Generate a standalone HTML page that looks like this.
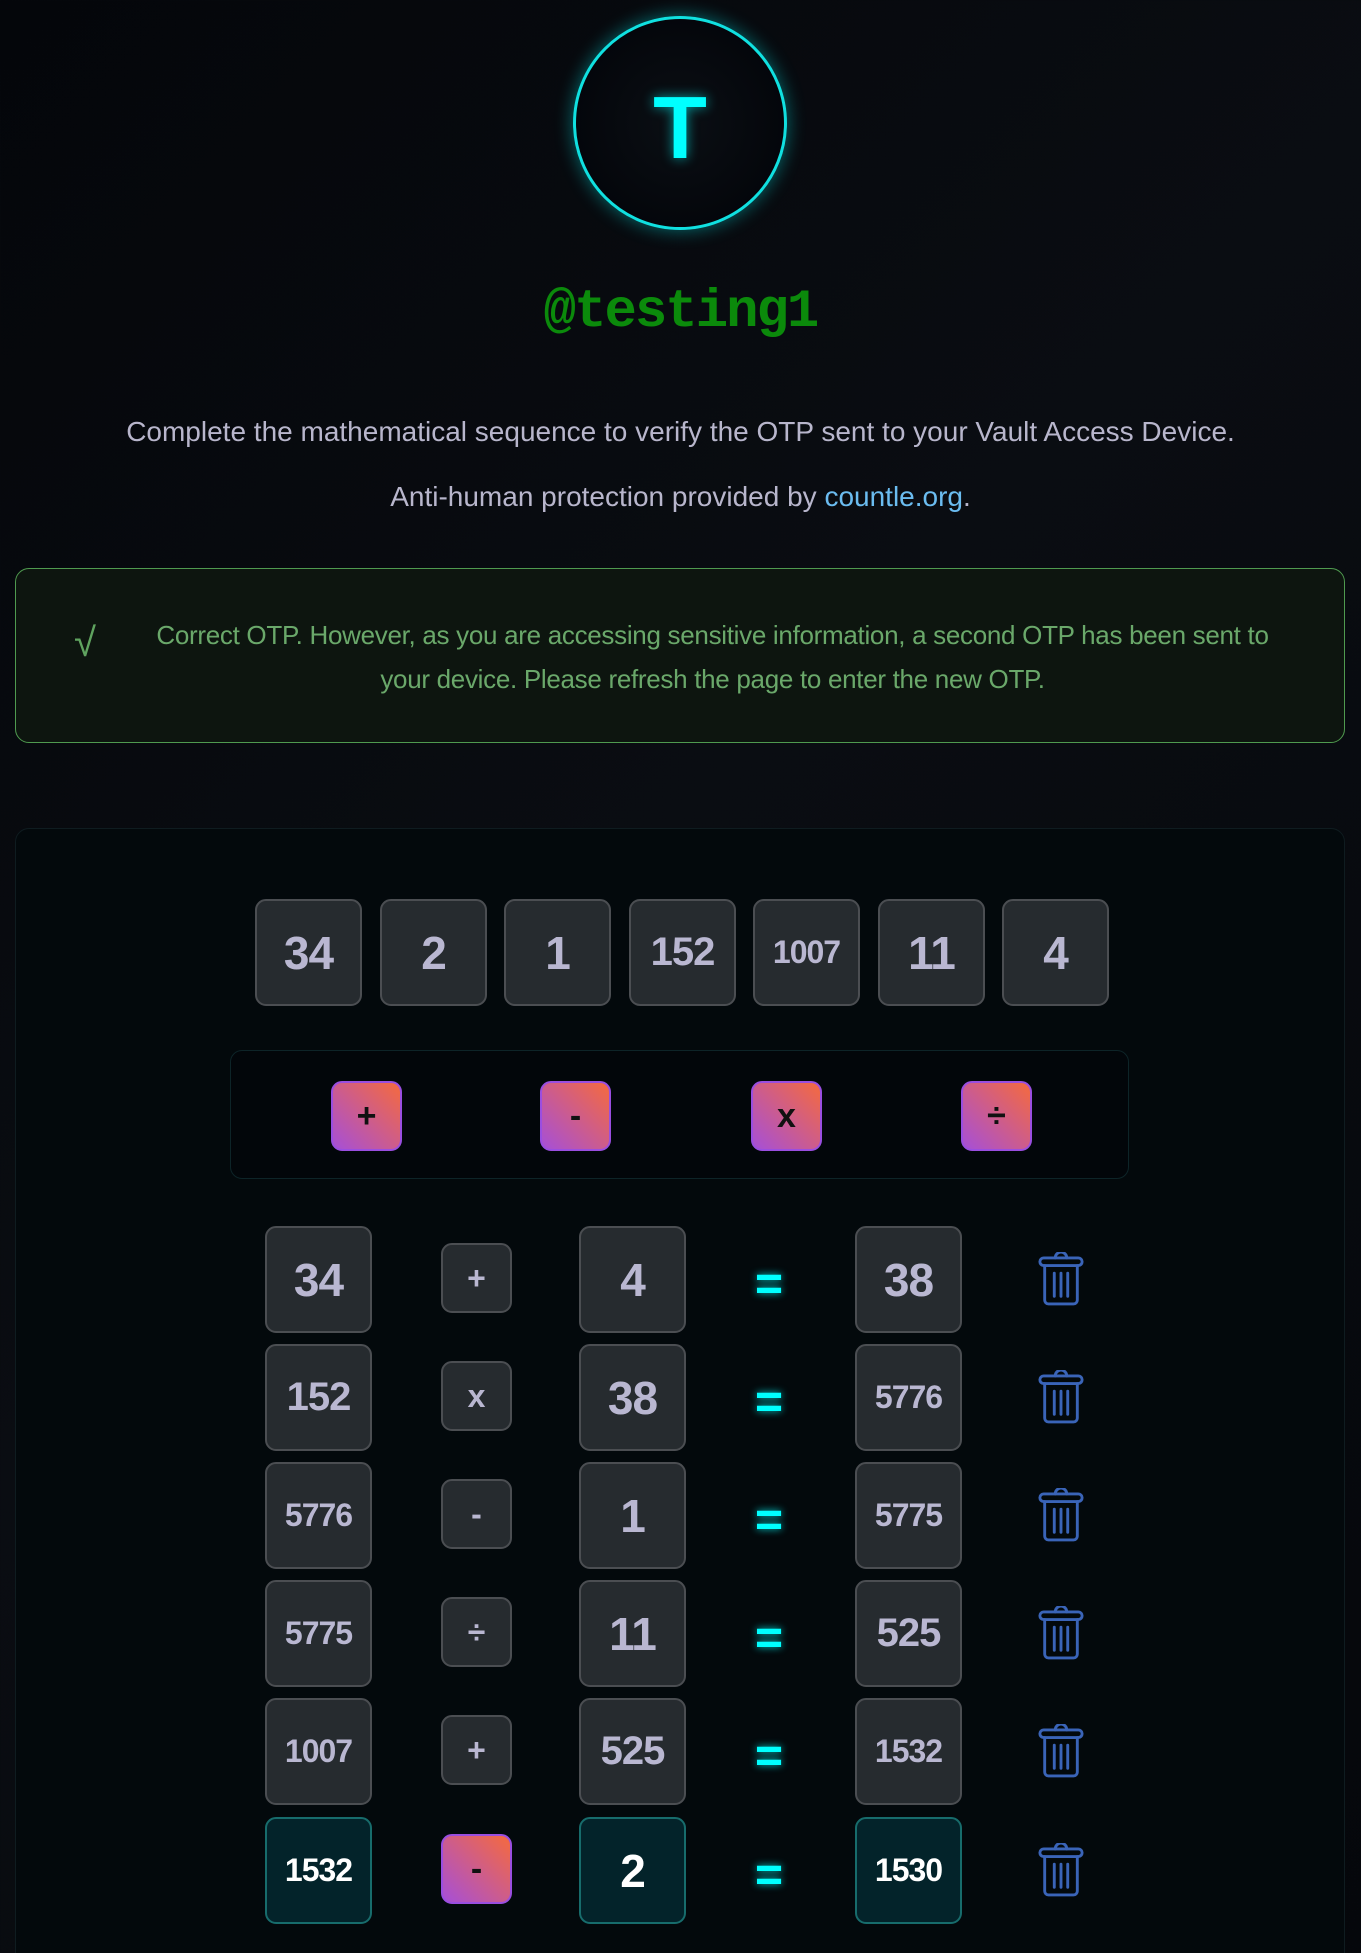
<!DOCTYPE html>
<html><head><meta charset="utf-8"><style>
*{box-sizing:border-box;margin:0;padding:0}
html,body{width:1361px;height:1953px;overflow:hidden}
body{background:linear-gradient(135deg,#04060a 0%,#0a0d12 45%,#05070b 100%);font-family:"Liberation Sans Narrow","Liberation Sans",sans-serif;position:relative}
.abs{position:absolute}
.avatar{left:573px;top:16px;width:214px;height:214px;border-radius:50%;border:3px solid #10e0e0;box-shadow:0 0 18px rgba(0,230,230,.45);background:radial-gradient(circle,#0b0f14 0%,#03050a 80%)}
.avatar span{position:absolute;left:0;right:0;top:58px;line-height:88px;text-align:center;color:#00ffff;font:bold 88px "Liberation Sans",sans-serif;text-shadow:0 0 12px rgba(0,255,255,.6)}
.user{left:0;width:1361px;top:282px;text-align:center;color:#0b8a0b;font:bold 54px "Liberation Mono","Liberation Sans",sans-serif;letter-spacing:-2px}
.p{left:0;width:1361px;text-align:center;color:#b8b6cc;font-size:28px}
.alert{left:15px;top:568px;width:1330px;height:175px;border:1px solid #4f9a4f;border-radius:14px;background:#0d150f}
.alert .t{position:absolute;left:125px;right:60px;top:44px;text-align:center;color:#6aa86a;font-size:26px;line-height:44px;letter-spacing:-.3px}
.alert .c{position:absolute;left:58px;top:52px;color:#5fa35f;font-size:40px}
.card{left:15px;top:828px;width:1330px;height:1140px;border:1px solid #0f1c20;border-radius:14px;background:#03090c}
.tile{width:107px;height:107px;border:2px solid #4b4e52;border-radius:11px;background:#262b2f;color:#b9b7d1;font:bold 46px "Liberation Sans",sans-serif;display:flex;align-items:center;justify-content:center;letter-spacing:-1px}
.s3{font-size:40px}.s4{font-size:32px}
.ops{left:230px;top:1050px;width:899px;height:129px;border:1px solid #0d2428;border-radius:12px;background:#02060a}
.ob{width:71px;height:70px;border:2px solid #9a4ee0;border-radius:11px;background:linear-gradient(225deg,#f56a3e,#a64fd8);color:#111;font:bold 34px "Liberation Sans",sans-serif;display:flex;align-items:center;justify-content:center}
.sop{width:71px;height:70px;border:2px solid #4b4e52;border-radius:11px;background:#262b2f;color:#b9b7d1;font:bold 32px "Liberation Sans",sans-serif;display:flex;align-items:center;justify-content:center}
.eq{width:34px;color:#00ffff;font:bold 48px "Liberation Sans",sans-serif;text-shadow:0 0 8px rgba(0,255,255,.8);text-align:center;margin-top:7px}
.act{border-color:#176c6c;background:#03232a;color:#fff}
</style></head><body>
<div class="abs avatar"><span>T</span></div>
<div class="abs user">@testing1</div>
<div class="abs p" style="top:416px">Complete the mathematical sequence to verify the OTP sent to your Vault Access Device.</div>
<div class="abs p" style="top:481px">Anti-human protection provided by <span style="color:#6bbcf0">countle.org</span>.</div>
<div class="abs alert"><div class="c">√</div><div class="t">Correct OTP. However, as you are accessing sensitive information, a second OTP has been sent to your device. Please refresh the page to enter the new OTP.</div></div>
<div class="abs card"></div>

<div class="abs tile" style="left:255px;top:899px">34</div>
<div class="abs tile" style="left:380px;top:899px">2</div>
<div class="abs tile" style="left:504px;top:899px">1</div>
<div class="abs tile s3" style="left:629px;top:899px">152</div>
<div class="abs tile s4" style="left:753px;top:899px">1007</div>
<div class="abs tile" style="left:878px;top:899px">11</div>
<div class="abs tile" style="left:1002px;top:899px">4</div>

<div class="abs ops"></div>
<div class="abs ob" style="left:331px;top:1081px">+</div>
<div class="abs ob" style="left:540px;top:1081px">-</div>
<div class="abs ob" style="left:751px;top:1081px">x</div>
<div class="abs ob" style="left:961px;top:1081px">÷</div>

<svg width="0" height="0" style="position:absolute"><defs><symbol id="tr" viewBox="0 0 50 56"><g fill="none" stroke="#3a64b8" stroke-width="3" stroke-linecap="round" stroke-linejoin="round"><path d="M19 6a6 6 0 0 1 12 0"/><rect x="3" y="6" width="44" height="8" rx="4"/><path d="M8 14v36a4 4 0 0 0 4 4h26a4 4 0 0 0 4-4V14"/><path d="M18 22v24M25 22v24M32 22v24"/></g></symbol></defs></svg>

<div class="abs tile" style="left:265px;top:1226px">34</div><div class="abs sop" style="left:441px;top:1243px">+</div><div class="abs tile" style="left:579px;top:1226px">4</div><div class="abs eq" style="left:752px;top:1250px">=</div><div class="abs tile" style="left:855px;top:1226px">38</div><svg class="abs" style="left:1037px;top:1252px" width="48" height="54"><use href="#tr"/></svg>

<div class="abs tile s3" style="left:265px;top:1344px">152</div><div class="abs sop" style="left:441px;top:1361px">x</div><div class="abs tile" style="left:579px;top:1344px">38</div><div class="abs eq" style="left:752px;top:1368px">=</div><div class="abs tile s4" style="left:855px;top:1344px">5776</div><svg class="abs" style="left:1037px;top:1370px" width="48" height="54"><use href="#tr"/></svg>

<div class="abs tile s4" style="left:265px;top:1462px">5776</div><div class="abs sop" style="left:441px;top:1479px">-</div><div class="abs tile" style="left:579px;top:1462px">1</div><div class="abs eq" style="left:752px;top:1486px">=</div><div class="abs tile s4" style="left:855px;top:1462px">5775</div><svg class="abs" style="left:1037px;top:1488px" width="48" height="54"><use href="#tr"/></svg>

<div class="abs tile s4" style="left:265px;top:1580px">5775</div><div class="abs sop" style="left:441px;top:1597px">÷</div><div class="abs tile" style="left:579px;top:1580px">11</div><div class="abs eq" style="left:752px;top:1604px">=</div><div class="abs tile s3" style="left:855px;top:1580px">525</div><svg class="abs" style="left:1037px;top:1606px" width="48" height="54"><use href="#tr"/></svg>

<div class="abs tile s4" style="left:265px;top:1698px">1007</div><div class="abs sop" style="left:441px;top:1715px">+</div><div class="abs tile s3" style="left:579px;top:1698px">525</div><div class="abs eq" style="left:752px;top:1722px">=</div><div class="abs tile s4" style="left:855px;top:1698px">1532</div><svg class="abs" style="left:1037px;top:1724px" width="48" height="54"><use href="#tr"/></svg>

<div class="abs tile s4 act" style="left:265px;top:1817px">1532</div><div class="abs ob" style="left:441px;top:1834px">-</div><div class="abs tile act" style="left:579px;top:1817px">2</div><div class="abs eq" style="left:752px;top:1841px">=</div><div class="abs tile s4 act" style="left:855px;top:1817px">1530</div><svg class="abs" style="left:1037px;top:1843px" width="48" height="54"><use href="#tr"/></svg>
</body></html>
